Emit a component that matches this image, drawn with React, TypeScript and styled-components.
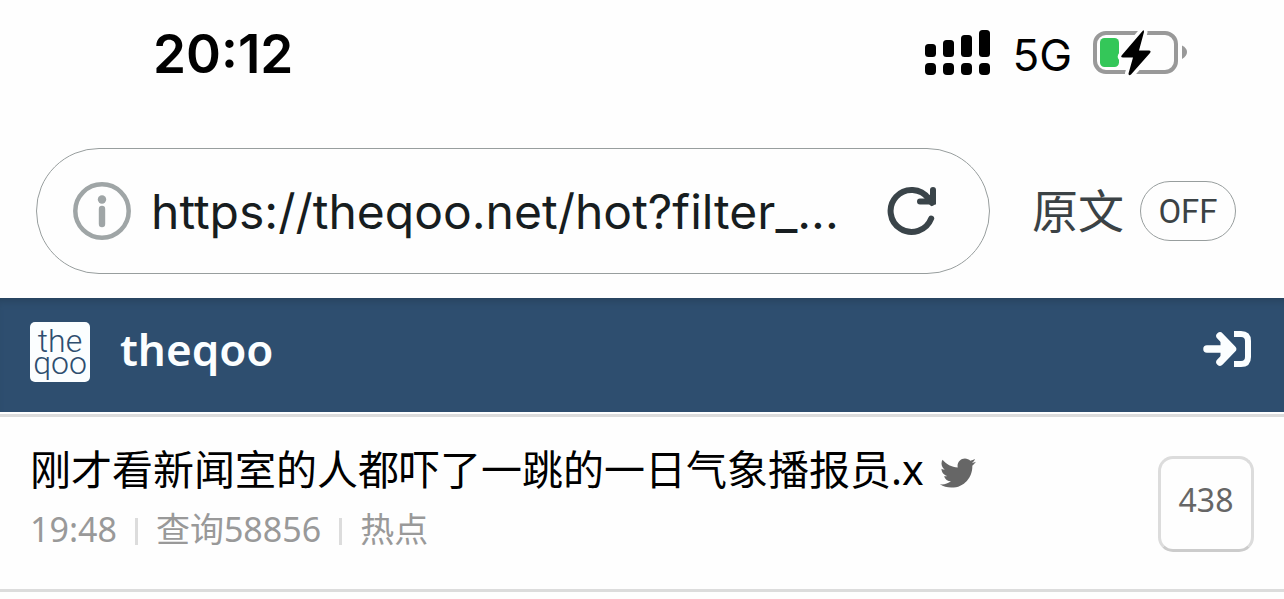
import React from "react";
import styled, { createGlobalStyle } from "styled-components";
import { FaTwitter } from "react-icons/fa";

const GlobalStyle = createGlobalStyle`
  * { box-sizing: border-box; }
  body {
    margin: 0;
    background: #fefefe;
    color: #000;
    font-family: "Noto Sans", "Noto Sans CJK SC", sans-serif;
  }
  button, input { font: inherit; color: inherit; }
  button { cursor: pointer; }
  svg { display: block; flex: none; }
`;

const uiFont = `Inter, "Noto Sans CJK SC", sans-serif`;

const StatusBar = styled.div`
  display: flex;
  align-items: center;
  justify-content: space-between;
  height: 108px;
  padding: 0 96px 0 153px;
  font-family: ${uiFont};
`;

const Clock = styled.time`
  font-size: 53px;
  line-height: 64px;
  font-weight: 600;
`;

const StatusIcons = styled.div`
  display: flex;
  align-items: center;
  gap: 21px;
  padding-bottom: 2px;
`;

const Network = styled.span`
  font-size: 44px;
  line-height: 56px;
  padding-top: 4px;
`;

const AddressRow = styled.div`
  display: flex;
  align-items: center;
  gap: 42px;
  padding: 40px 48px 24px 36px;
  font-family: ${uiFont};
`;

const AddressBar = styled.form`
  display: flex;
  flex: 1;
  align-items: center;
  min-width: 0;
  height: 126px;
  padding: 0 52px 0 36px;
  border: 1px solid #989e9e;
  border-radius: 63px;
`;

const IconButton = styled.button`
  display: flex;
  align-items: center;
  justify-content: center;
  padding: 0;
  border: 0;
  background: none;
`;

const UrlInput = styled.input`
  flex: 1;
  min-width: 0;
  margin: 2px 16px 0 20px;
  padding: 0;
  border: 0;
  outline: 0;
  background: none;
  color: #171d20;
  font-size: 48px;
  line-height: 64px;
  text-overflow: ellipsis;
`;

const Translate = styled.div`
  display: flex;
  align-items: center;
  gap: 16px;
  color: #3b4245;
`;

const TranslateLabel = styled.label`
  font-size: 46px;
  line-height: 64px;
`;

const TranslateToggle = styled.button`
  width: 96px;
  height: 60px;
  padding: 0;
  border: 1px solid #989e9e;
  border-radius: 30px;
  background: none;
  font-family: Roboto, sans-serif;
  font-size: 33px;
`;

const SiteHeader = styled.header`
  display: flex;
  align-items: center;
  justify-content: space-between;
  height: 114px;
  padding: 0 32px 6px 30px;
  background: #2e4e6f;
  box-shadow: inset 0 8px 8px -6px #26405a;
  color: #fbfeff;
`;

const Brand = styled.a`
  display: flex;
  align-items: center;
  gap: 30px;
  color: inherit;
  text-decoration: none;
`;

const BrandName = styled.span`
  font-size: 44px;
  line-height: 60px;
  font-weight: 600;
  padding-bottom: 6px;
`;

const LoginButton = styled(IconButton)`
  padding-bottom: 6px;
`;

const Post = styled.article`
  display: flex;
  align-items: flex-start;
  justify-content: space-between;
  margin-top: 2px;
  padding: 22px 30px 36px;
  border: solid #dcdcdc;
  border-width: 3px 0;
`;

const PostTitle = styled.h1`
  display: flex;
  align-items: center;
  gap: 16px;
  margin: 0;
  font-size: 41px;
  line-height: 60px;
  font-weight: 400;
  white-space: nowrap;

  svg { margin-top: 8px; }
`;

const PostMeta = styled.div`
  display: flex;
  align-items: center;
  padding-top: 6px;
  color: #999;
  font-size: 34px;
  line-height: 48px;
  white-space: nowrap;
`;

const MetaItem = styled.span`
  & + & {
    display: flex;
    align-items: center;
  }
  & + &::before {
    content: "";
    width: 3px;
    height: 27px;
    margin: 4px 18px 0;
    background: #dcdcdc;
  }
`;

const CommentCount = styled.button`
  width: 96px;
  height: 96px;
  margin-top: 17px;
  padding: 0 0 10px;
  border: 3px solid #dcdcdc;
  border-bottom-color: #ccc;
  border-radius: 15px;
  background: none;
  color: #666;
  font-size: 32px;
`;

const SIGNAL_TOPS = [14, 10, 5, 0];

function SignalIcon() {
  return (
    <svg width="66" height="46" viewBox="0 0 66 46" aria-hidden="true">
      {SIGNAL_TOPS.map((top, i) => (
        <g key={top}>
          <rect x={i * 18} y={top} width="11" height={27 - top} rx="3.5" />
          <rect x={i * 18} y="33" width="11" height="12" rx="4" />
        </g>
      ))}
    </svg>
  );
}

function BatteryIcon() {
  return (
    <svg width="95" height="48" viewBox="0 0 95 48" aria-hidden="true">
      <rect x="2" y="4" width="81" height="39" rx="11" fill="none" stroke="#999" strokeWidth="4" />
      <path d="M89 16.5Q94 19 94 23T89 30Z" fill="#999" />
      <rect x="7" y="9" width="19" height="29" rx="4.5" fill="#34c759" />
      <path
        d="M50 1.5L29 26q-2 2.500 1 2.500H40L35.500 44.500q0 3 2.500 1L57 24q1.500-2.500-1-2.500H46L51 3q0-2.500-1-1.500Z"
        stroke="#fefefe"
        strokeWidth="7"
        paintOrder="stroke"
      />
    </svg>
  );
}

function InfoIcon() {
  return (
    <svg width="58" height="58" viewBox="0 0 58 58" fill="none" aria-hidden="true">
      <circle cx="29" cy="29" r="26.7" stroke="#9fa5a6" strokeWidth="4.500" />
      <circle cx="29" cy="17.500" r="4.200" fill="#9fa5a6" />
      <path d="M29 27V42" stroke="#9fa5a6" strokeWidth="6.400" strokeLinecap="round" />
    </svg>
  );
}

function ReloadIcon() {
  return (
    <svg width="50" height="50" viewBox="0 0 50 50" fill="none" stroke="#3a4449" strokeWidth="6" strokeLinecap="round" strokeLinejoin="miter" aria-hidden="true">
      <path d="M44.200 32.500A21 21 0 1 1 41.500 12.500L45 17" />
      <path d="M46 4V15.500H33" />
      <path d="M46 8V15.500H37Z" fill="#3a4449" strokeWidth="3" />
    </svg>
  );
}

function LogoIcon() {
  return (
    <svg width="60" height="60" viewBox="0 0 60 60" aria-hidden="true">
      <rect width="60" height="60" rx="5" fill="#fbfeff" />
      <g fill="#2e4e6f" fontFamily="Roboto" fontSize="32" fontWeight="300" textAnchor="middle">
        <text x="30" y="30">the</text>
        <text x="30" y="52">qoo</text>
      </g>
    </svg>
  );
}

function LoginIcon() {
  return (
    <svg width="49" height="38" viewBox="0 0 49 38" fill="none" stroke="currentColor" strokeLinecap="round" strokeLinejoin="round" aria-hidden="true">
      <path d="M4 19H26" strokeWidth="7.500" />
      <path d="M17 6L29.500 19L17 32" strokeWidth="7.500" />
      <path d="M19 11L28 19L19 27Z" fill="currentColor" strokeWidth="3" />
      <path d="M31 4H38Q45 4 45 11V27Q45 34 38 34H31" strokeWidth="6" strokeLinecap="butt" />
    </svg>
  );
}

export default function App() {
  return (
    <>
      <GlobalStyle />
      <StatusBar>
        <Clock>20:12</Clock>
        <StatusIcons>
          <SignalIcon />
          <Network>5G</Network>
          <BatteryIcon />
        </StatusIcons>
      </StatusBar>
      <AddressRow>
        <AddressBar>
          <IconButton type="button" aria-label="Site information">
            <InfoIcon />
          </IconButton>
          <UrlInput aria-label="Address" defaultValue="https://theqoo.net/hot?filter_..." />
          <IconButton type="button" aria-label="Reload">
            <ReloadIcon />
          </IconButton>
        </AddressBar>
        <Translate>
          <TranslateLabel htmlFor="translate">原文</TranslateLabel>
          <TranslateToggle id="translate" type="button">OFF</TranslateToggle>
        </Translate>
      </AddressRow>
      <SiteHeader>
        <Brand href="#">
          <LogoIcon />
          <BrandName>theqoo</BrandName>
        </Brand>
        <LoginButton type="button" aria-label="Log in">
          <LoginIcon />
        </LoginButton>
      </SiteHeader>
      <Post>
        <div>
          <PostTitle>
            刚才看新闻室的人都吓了一跳的一日气象播报员.x
            <FaTwitter size={36} color="#666" aria-hidden="true" />
          </PostTitle>
          <PostMeta>
            <MetaItem>19:48</MetaItem>
            <MetaItem>查询58856</MetaItem>
            <MetaItem>热点</MetaItem>
          </PostMeta>
        </div>
        <CommentCount type="button">438</CommentCount>
      </Post>
    </>
  );
}
